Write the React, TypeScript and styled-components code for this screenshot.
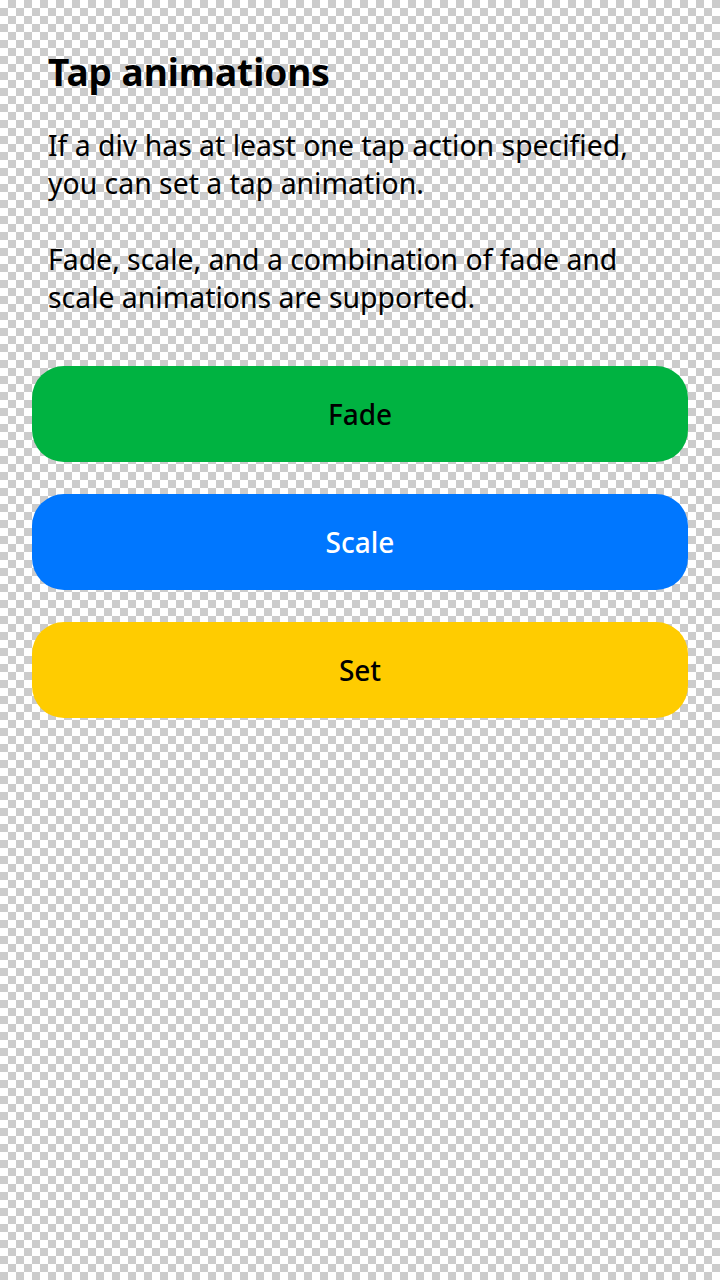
import React from "react";
import styled, { createGlobalStyle } from "styled-components";

const Global = createGlobalStyle`
  html, body { margin: 0; padding: 0; }
  body {
    min-height: 1280px;
    background-color: #ffffff;
    background-image: conic-gradient(#cccccc 0 25%, #ffffff 0 50%, #cccccc 0 75%, #ffffff 0);
    background-size: 16px 16px;
    background-position: 0 0;
    font-family: "Noto Sans", "Open Sans", sans-serif;
    color: #000;
  }
`;

const Page = styled.div`
  display: flex;
  flex-direction: column;
  padding: 48px 32px 0;
`;

const Title = styled.h1`
  margin: 0;
  padding: 0 16px;
  font-size: 37px;
  line-height: 48px;
  font-weight: 700;
`;

const Text = styled.p`
  margin: 30px 0 0;
  padding: 0 16px;
  font-size: 28.4px;
  line-height: 38px;
  font-weight: 400;
  white-space: pre-line;
`;

const Buttons = styled.div`
  display: flex;
  flex-direction: column;
  gap: 32px;
  margin-top: 50px;
`;

const Button = styled.div<{ $bg: string; $fg: string }>`
  height: 96px;
  border-radius: 32px;
  background: ${(p) => p.$bg};
  color: ${(p) => p.$fg};
  display: flex;
  align-items: center;
  justify-content: center;
  font-size: 28px;
  font-weight: 500;
`;

export default function App() {
  return (
    <>
      <Global />
      <Page>
        <Title>Tap animations</Title>
        <Text>
          {"If a div has at least one tap action specified,\nyou can set a tap animation.\n\nFade, scale, and a combination of fade and\nscale animations are supported."}
        </Text>
        <Buttons>
          <Button $bg="#00b341" $fg="#000">Fade</Button>
          <Button $bg="#0077ff" $fg="#fff">Scale</Button>
          <Button $bg="#ffcc00" $fg="#000">Set</Button>
        </Buttons>
      </Page>
    </>
  );
}
